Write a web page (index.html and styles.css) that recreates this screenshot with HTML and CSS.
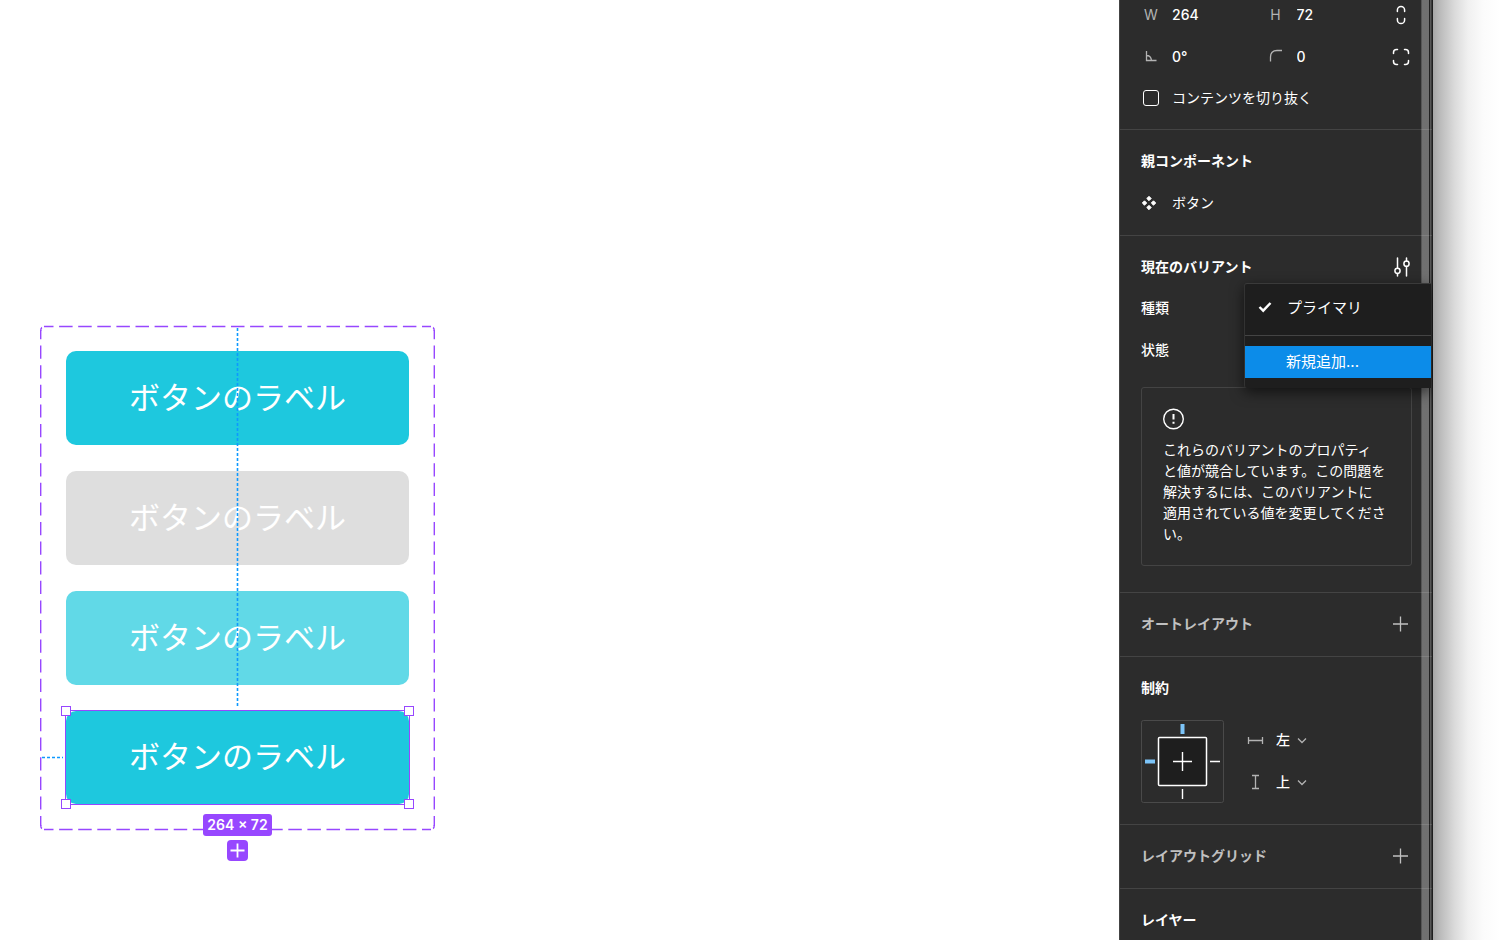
FILE: index.html
```html
<!DOCTYPE html>
<html lang="ja">
<head>
<meta charset="utf-8">
<title>ボタン</title>
<link rel="stylesheet" href="styles.css">
</head>
<body>
<div class="app">
  <main class="canvas">
    <div class="variant-set">
      <svg class="set-outline" width="397" height="506" viewBox="-1 -1 397 506" aria-hidden="true">
        <g fill="none" stroke="#9747ff" stroke-width="1.4">
          <path stroke-dasharray="13.5 5.6" stroke-dashoffset="4" d="M4 .5H391M4 503.5H391"/>
          <path stroke-dasharray="13.2 6.4" stroke-dashoffset="4" d="M.7 4V500M394.3 4V500"/>
          <path d="M.7 5Q.7 2 2 1.500M394.300 5Q394.300 2 393 1.500M.7 499Q.7 502 2 502.500M394.300 499Q394.300 502 393 502.500"/>
        </g>
      </svg>
      <button class="sample primary">ボタンのラベル</button>
      <button class="sample disabled">ボタンのラベル</button>
      <button class="sample hover">ボタンのラベル</button>
      <div class="selection">
        <button class="sample primary">ボタンのラベル</button>
        <span class="handle nw"></span><span class="handle ne"></span>
        <span class="handle sw"></span><span class="handle se"></span>
      </div>
      <svg class="guides" width="395" height="504" viewBox="0 0 395 504" aria-hidden="true">
        <path d="M197.500 2V382M2 431.500H23" fill="none" stroke="#0d99ff" stroke-width="1.600" stroke-dasharray="3 2"/>
      </svg>
      <div class="set-tools">
        <span class="size-badge">264 × 72</span>
        <button class="add-variant" aria-label="バリアントを追加">
          <svg width="21" height="21" viewBox="0 0 21 21"><path d="M10.500 3.500v14M3.500 10.500h14" stroke="#fff" stroke-width="1.800"/></svg>
        </button>
      </div>
    </div>
  </main>

  <aside class="panel">
    <section class="section size">
      <div class="row">
        <div class="field"><label class="cap" for="w">W</label><input id="w" value="264"></div>
        <div class="field"><label class="cap" for="h">H</label><input id="h" value="72"></div>
        <button class="tool" aria-label="縦横比を固定">
          <svg width="22" height="22" viewBox="0 0 22 22"><path d="M7.400 7.500V6a3.600 3.600 0 0 1 7.200 0v1.500M7.400 14.500V16a3.600 3.600 0 0 0 7.200 0v-1.500"/></svg>
        </button>
      </div>
      <div class="row">
        <div class="field"><label class="cap" for="rot" aria-label="回転"><svg width="20" height="20" viewBox="0 0 20 20"><path d="M5.500 5v9.500h10M5.500 9.500q4.500 0 5 5"/></svg></label><input id="rot" value="0°"></div>
        <div class="field"><label class="cap" for="rad" aria-label="角の半径"><svg width="20" height="20" viewBox="0 0 20 20"><path d="M4.500 15.500V11q0-6.500 6.500-6.500h5"/></svg></label><input id="rad" value="0"></div>
        <button class="tool" aria-label="個別の角">
          <svg width="22" height="22" viewBox="0 0 22 22"><path d="M3.500 7.500V6.500q0-3 3-3h1M14.500 3.500h1q3 0 3 3v1M18.500 14.500v1q0 3-3 3h-1M7.500 18.500h-1q-3 0-3-3v-1"/></svg>
        </button>
      </div>
      <label class="row check"><input type="checkbox"><span>コンテンツを切り抜く</span></label>
    </section>

    <section class="section">
      <h2 class="row">親コンポーネント</h2>
      <div class="row parent">
        <svg width="16" height="16" viewBox="0 0 16 16" aria-hidden="true"><path fill="#fff" stroke="#fff" stroke-width="1" stroke-linejoin="round" d="M8 1.300 10.200 3.500 8 5.700 5.800 3.500zM8 10.300l2.200 2.200L8 14.700l-2.200-2.200zM3.500 5.800 5.700 8 3.500 10.200 1.300 8zM12.500 5.800 14.700 8l-2.200 2.200L10.300 8z"/></svg>
        <span>ボタン</span>
      </div>
    </section>

    <section class="section variant">
      <div class="row head"><h2>現在のバリアント</h2>
        <button class="tool" aria-label="プロパティを編集">
          <svg width="22" height="22" viewBox="0 0 22 22"><path d="M7.500 2v10M7.500 17.500V20M16.500 2v3M16.500 10.500V20"/><circle cx="7.500" cy="14.800" r="2.600"/><circle cx="16.500" cy="7.700" r="2.600"/></svg>
        </button>
      </div>
      <div class="row prop">種類
        <div class="menu" role="listbox" aria-label="種類">
          <button class="option" role="option" aria-selected="true"><svg width="14" height="14" viewBox="0 0 14 14"><path d="M1.500 7 5.200 10.700 12.500 3" fill="none" stroke="#fff" stroke-width="2.400"/></svg>プライマリ</button>
          <hr>
          <button class="option add" role="option" aria-selected="false">新規追加...</button>
        </div>
      </div>
      <div class="row prop">状態</div>
      <div class="notice">
        <svg width="22" height="22" viewBox="0 0 22 22" aria-hidden="true"><circle cx="10.500" cy="11" r="9.800" fill="none" stroke="#fff" stroke-width="1.400"/><path d="M10.500 6v5.500M10.500 13.800v2" stroke="#fff" stroke-width="2"/></svg>
        <p>これらのバリアントのプロパティ<br>と値が競合しています。この問題を<br>解決するには、このバリアントに<br>適用されている値を変更してくださ<br>い。</p>
      </div>
    </section>

    <section class="section">
      <div class="row head muted"><h2>オートレイアウト</h2>
        <button class="tool" aria-label="オートレイアウトを追加"><svg width="22" height="22" viewBox="0 0 22 22"><path d="M10.500 3.500v15M3 11h15"/></svg></button>
      </div>
    </section>

    <section class="section constraints">
      <h2 class="row">制約</h2>
      <div class="constraint-body">
        <svg width="83" height="83" viewBox="0 0 83 83" aria-hidden="true">
          <rect x=".5" y=".5" width="82" height="82" rx="2" fill="none" stroke="#4a4a4a"/>
          <rect x="17.500" y="17.500" width="48" height="48" rx="1" fill="#1e1e1e" stroke="#fff" stroke-width="1.500"/>
          <path d="M41.500 32v19M32 41.500h19M41.500 69v10M69 41.500h10" stroke="#fff" stroke-width="1.400"/>
          <path d="M41.500 4v10M4 41.500h10" stroke="#7cc4f8" stroke-width="4"/>
        </svg>
        <div class="axes">
          <div class="axis"><label for="cx" aria-label="水平方向"><svg width="20" height="20" viewBox="0 0 20 20"><path d="M3.500 6v7M17.500 6v7M3.500 9.500h14"/></svg></label><select id="cx"><option>左</option></select><svg class="chev" width="10" height="10" viewBox="0 0 10 10"><path d="M1 2.500l4 4 4-4"/></svg></div>
          <div class="axis"><label for="cy" aria-label="垂直方向"><svg width="20" height="20" viewBox="0 0 20 20"><path d="M7 2.500h7M7 15.500h7M10.500 2.500v13"/></svg></label><select id="cy"><option>上</option></select><svg class="chev" width="10" height="10" viewBox="0 0 10 10"><path d="M1 2.500l4 4 4-4"/></svg></div>
        </div>
      </div>
    </section>

    <section class="section">
      <div class="row head muted"><h2>レイアウトグリッド</h2>
        <button class="tool" aria-label="レイアウトグリッドを追加"><svg width="22" height="22" viewBox="0 0 22 22"><path d="M10.500 3.500v15M3 11h15"/></svg></button>
      </div>
    </section>

    <section class="section">
      <h2 class="row">レイヤー</h2>
    </section>
  </aside>
  <div class="window-shadow"></div>
</div>
</body>
</html>
```
FILE: styles.css
```css
* { box-sizing: border-box; }

body {
  margin: 0;
  background: #fff;
  color: #fff;
  font: 14px/21px Inter, "Noto Sans CJK JP", sans-serif;
}

button, input, select {
  margin: 0;
  padding: 0;
  border: 0;
  background: none;
  color: inherit;
  font: inherit;
}

h2, p { margin: 0; font-size: 14px; }
h2 { padding-bottom: 2px; font-weight: 700; }
svg { display: block; flex: none; }

.app { display: flex; height: 100vh; overflow: hidden; }
.canvas { position: relative; flex: 1; background: #fff; }

/* Component set */
.variant-set {
  position: absolute;
  left: 40px;
  top: 326px;
  width: 395px;
  padding: 25px 26px;
  display: flex;
  flex-direction: column;
  gap: 26px;
}
.set-outline { position: absolute; left: -1px; top: -1px; }
.guides { position: absolute; left: 0; top: 0; pointer-events: none; }

.sample {
  display: block;
  width: 100%;
  height: 94px;
  padding-bottom: 5px;
  border-radius: 10px;
  color: #fff;
  font-family: "Noto Sans CJK JP", sans-serif;
  font-size: 31px;
  line-height: 46px;
}
.primary { background: #1ec8de; }
.disabled { background: #dedede; }
.hover { background: #61d9e7; }

.selection { position: relative; outline: 1px solid #9747ff; }
.selection .sample { height: 93px; }
.handle {
  position: absolute;
  width: 10px;
  height: 10px;
  border: 1px solid #9747ff;
  background: #fff;
}
.nw { left: -5px; top: -5px; }
.ne { right: -5px; top: -5px; }
.sw { left: -5px; bottom: -5px; }
.se { right: -5px; bottom: -5px; }

.set-tools {
  position: absolute;
  left: 0;
  right: 0;
  top: 488px;
  display: flex;
  flex-direction: column;
  align-items: center;
  gap: 4px;
}
.size-badge {
  padding: 0 4px;
  border-radius: 3px;
  background: #9747ff;
  font-weight: 600;
  line-height: 22px;
}
.add-variant { border-radius: 4px; background: #9747ff; }

/* Properties panel */
.panel {
  position: relative;
  width: 314px;
  flex: none;
  overflow: hidden;
  border-left: 1px solid #444;
  background: #2c2c2c;
}
.panel::after {
  content: "";
  position: absolute;
  top: 0;
  bottom: 0;
  right: 0;
  width: 12px;
  background: linear-gradient(90deg, #fff3 0 1px, #ffffff52 1px 8px, #0004 8px 9px, #fff3 9px 10px, #fff1 10px 11px, #1e1e1e 11px);
  pointer-events: none;
}
.section {
  display: flex;
  flex-direction: column;
  gap: 12px;
  padding: 16px 21px 17px;
  border-bottom: 1px solid #444;
}
.size { padding-top: 0; padding-bottom: 15px; }
.row { display: flex; align-items: center; height: 30px; }
.row span { padding-bottom: 2px; }
.head { justify-content: space-between; }
.muted { color: #c0c0c0; }

.field { display: flex; align-items: center; gap: 11px; width: 125px; }
.field input { width: 60px; padding-bottom: 2px; font-weight: 500; }
.cap { width: 20px; padding-bottom: 2px; color: #b3b3b3; text-align: center; }
.cap path, .axis path { fill: none; stroke: #b3b3b3; stroke-width: 1.3; }
.tool { margin-left: auto; }
.tool svg { fill: none; stroke: currentColor; stroke-width: 1.5; stroke-linecap: round; }
.muted .tool svg { stroke-width: 1.3; stroke-linecap: butt; }
.size .tool { margin-left: 0; }

.check { gap: 13px; padding-bottom: 2px; }
.check input {
  appearance: none;
  width: 16px;
  height: 16px;
  margin-left: 2px;
  border: 1px solid #fff;
  border-radius: 3px;
}
.parent { gap: 15px; }
.prop { position: relative; padding-bottom: 3px; font-weight: 500; }

.menu {
  position: absolute;
  z-index: 2;
  left: 103px;
  right: -19px;
  top: -11px;
  padding: 7px 0 10px;
  border-top: 1px solid #3a3a3a;
  border-left: 1px solid #333;
  border-radius: 3px 0 0 3px;
  background: #1e1e1e;
  box-shadow: 0 4px 14px #0009;
}
.menu hr { height: 1px; margin: 12px 0 10px; border: 0; background: #444; }
.option {
  display: flex;
  align-items: center;
  gap: 15px;
  width: 100%;
  height: 32px;
  padding-left: 13px;
  font-size: 15px;
  font-weight: 400;
}
.add { padding: 0 0 2px 41px; background: #0c8ce9; }

.notice {
  display: flex;
  flex-direction: column;
  gap: 9px;
  margin: 9px 0;
  padding: 20px 21px 21px;
  border: 1px solid #444;
  border-radius: 3px;
  white-space: nowrap;
}

.constraints { padding-bottom: 21px; }
.constraint-body { display: flex; align-items: center; gap: 21px; margin-top: 5px; }
.axes { display: flex; flex-direction: column; gap: 12px; }
.axis { display: flex; align-items: center; height: 30px; gap: 11px; }
.axis select { appearance: none; width: 14px; padding-bottom: 2px; font-weight: 500; }
.axis .chev { margin-left: -4px; }

.window-shadow {
  width: 67px;
  flex: none;
  background: linear-gradient(90deg, #a6a6a6, #bdbdbd 12%, #dadada 32%, #f0f0f0 52%, #fbfbfb 75%, #fff);
}
```
